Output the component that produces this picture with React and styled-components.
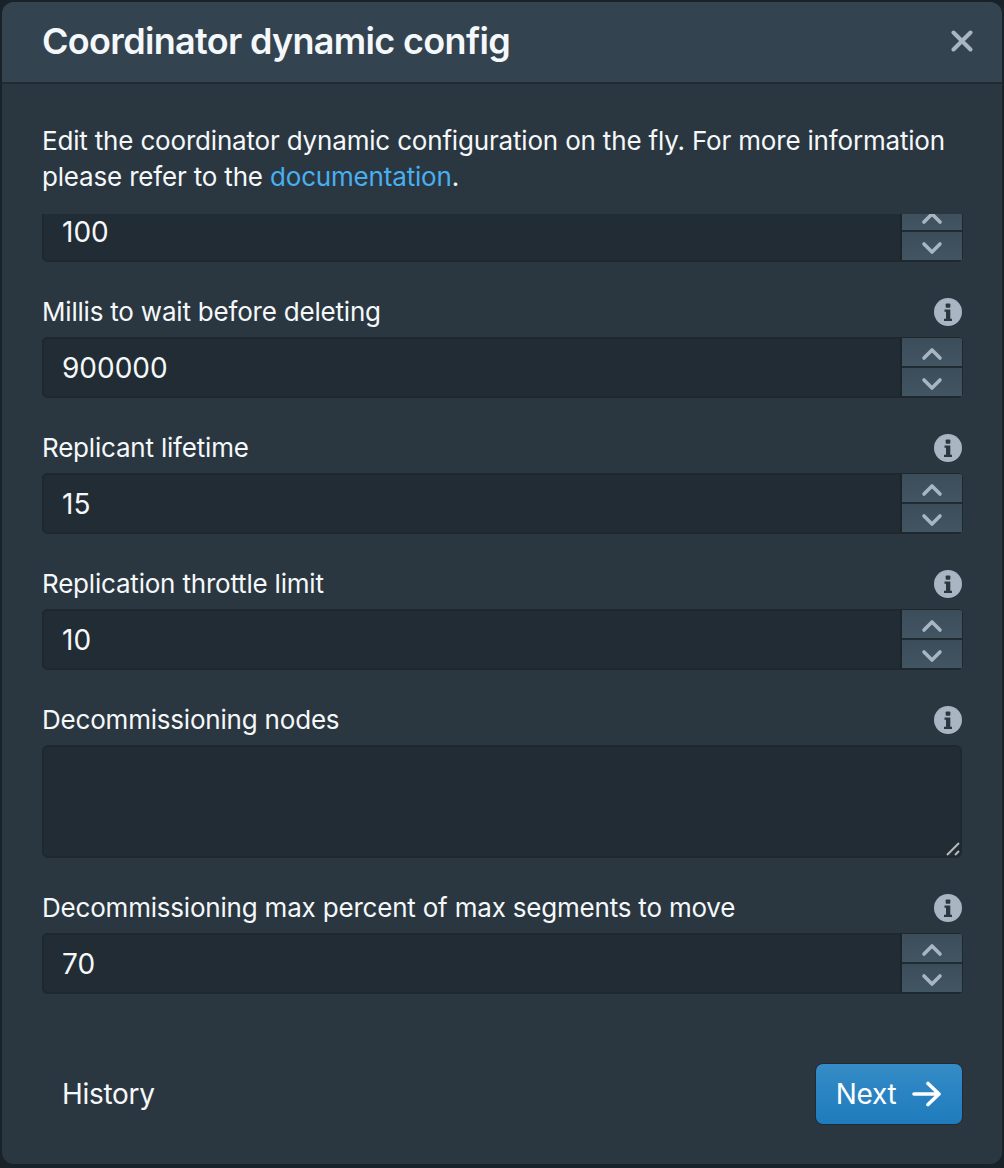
import React from "react";
import styled, { createGlobalStyle } from "styled-components";

const GlobalStyle = createGlobalStyle`
  html, body {
    margin: 0;
    height: 100%;
    background: #1a2229;
    font-family: Inter, "Liberation Sans", sans-serif;
  }
  * {
    box-sizing: border-box;
  }
`;

const Page = styled.div`
  width: 1004px;
  height: 1168px;
  padding: 2px 2px;
`;

const Dialog = styled.div`
  width: 1000px;
  height: 1162px;
  background: #2b3740;
  border-radius: 12px;
  display: flex;
  flex-direction: column;
  overflow: hidden;
`;

const Header = styled.div`
  height: 82px;
  flex-shrink: 0;
  display: flex;
  align-items: center;
  justify-content: space-between;
  padding: 0 29px 2px 40px;
  background: #33434f;
  border-bottom: 2px solid #212b33;
`;

const Title = styled.h1`
  margin: 0;
  font-size: 36px;
  font-weight: 600;
  letter-spacing: -0.68px;
  color: #f5f8fa;
`;

const CloseButton = styled.button`
  display: flex;
  padding: 0;
  border: none;
  background: none;
`;

const Intro = styled.p`
  margin: 39px 40px 19px;
  font-size: 26px;
  line-height: 36px;
  letter-spacing: -0.18px;
  color: #f5f8fa;
`;

const DocLink = styled.a`
  color: #48aff0;
`;

const Fields = styled.div`
  height: 804px;
  flex-shrink: 0;
  padding: 0 39px 24px 40px;
  display: flex;
  flex-direction: column;
  justify-content: flex-end;
  overflow: hidden;
`;

const FieldGroup = styled.div`
  flex-shrink: 0;
  margin-top: 34px;
`;

const LabelRow = styled.div`
  display: flex;
  align-items: center;
  justify-content: space-between;
  height: 30px;
  margin-bottom: 11px;
  padding-right: 1px;
`;

const Label = styled.label`
  font-size: 26px;
  letter-spacing: -0.2px;
  color: #f5f8fa;
`;

const InfoSvg = styled.svg`
  margin-top: 2px;
`;

const InputRow = styled.div`
  display: flex;
  height: 61px;
  border-radius: 6px;
  background: #222c34;
  box-shadow: inset 0 2px 0 #1f282f, inset 0 -2px 0 #1f282f,
    inset 2px 0 0 #1f282f;
  overflow: hidden;
`;

const NumberInput = styled.input`
  flex: 1;
  min-width: 0;
  padding: 0 20px;
  border: none;
  outline: none;
  background: transparent;
  font: inherit;
  font-size: 28px;
  color: #f5f8fa;
`;

const Stepper = styled.div`
  width: 63px;
  display: flex;
  flex-direction: column;
  border-left: 2px solid #1c252c;
  border-right: 1px solid #1f282f;
  border-top: 1px solid #1f282f;
  border-bottom: 2px solid #1f282f;
`;

const StepButton = styled.button`
  height: ${(p) => (p.$top ? "30px" : "28px")};
  display: flex;
  align-items: center;
  justify-content: center;
  padding: 3px 0 0;
  border: none;
  border-bottom: ${(p) => (p.$top ? "2px solid #212b33" : "none")};
  background: linear-gradient(#3c4d5a, #425563);
`;

const TextAreaWrap = styled.div`
  position: relative;
  width: calc(100% - 1px);
`;

const TextArea = styled.textarea`
  display: block;
  width: 100%;
  height: 113px;
  padding: 16px 20px;
  border: 2px solid #1f282f;
  border-radius: 6px;
  outline: none;
  resize: none;
  background: #222c34;
  font: inherit;
  font-size: 26px;
  color: #f5f8fa;
`;

const ResizeGrip = styled.svg`
  position: absolute;
  right: 2px;
  bottom: 2px;
  pointer-events: none;
`;

const Footer = styled.div`
  flex: 1;
  display: flex;
  align-items: flex-start;
  justify-content: space-between;
  padding: 45px 39px 0 60px;
`;

const HistoryButton = styled.button`
  margin-top: 14px;
  padding: 0;
  border: none;
  background: none;
  font: inherit;
  font-size: 28px;
  letter-spacing: -0.3px;
  color: #f5f8fa;
`;

const NextButton = styled.button`
  width: 148px;
  height: 62px;
  display: flex;
  align-items: center;
  justify-content: center;
  gap: 16px;
  padding: 0;
  border: 1px solid #212b33;
  border-radius: 8px;
  background: linear-gradient(#358cc6, #1f7bbd);
  font: inherit;
  font-size: 28px;
  letter-spacing: -0.3px;
  color: #ffffff;
`;

function InfoIcon() {
  return (
    <InfoSvg width="28" height="28" viewBox="0 0 28 28">
      <circle cx="14" cy="14" r="14" fill="#a7b6c2" />
      <rect x="11.7" y="5.5" width="4.6" height="4.2" rx="0.8" fill="#2b3740" />
      <path
        d="M10.5 11.5h5.8v9.2h1.7v2.3H10v-2.3h2v-6.9h-1.5z"
        fill="#2b3740"
      />
    </InfoSvg>
  );
}

function Chevron({ up }) {
  return (
    <svg width="22" height="14" viewBox="0 0 22 14" fill="none">
      <path
        d={up ? "M3 11l8-8 8 8" : "M3 3l8 8 8-8"}
        stroke="#a7b6c2"
        strokeWidth="3.6"
        strokeLinecap="round"
        strokeLinejoin="round"
      />
    </svg>
  );
}

function NumberControl({ value }) {
  return (
    <InputRow>
      <NumberInput type="text" defaultValue={value} />
      <Stepper>
        <StepButton $top>
          <Chevron up />
        </StepButton>
        <StepButton>
          <Chevron />
        </StepButton>
      </Stepper>
    </InputRow>
  );
}

function NumberField({ label, value }) {
  return (
    <FieldGroup>
      <LabelRow>
        <Label>{label}</Label>
        <InfoIcon />
      </LabelRow>
      <NumberControl value={value} />
    </FieldGroup>
  );
}

export default function App() {
  return (
    <Page>
      <GlobalStyle />
      <Dialog>
        <Header>
          <Title>Coordinator dynamic config</Title>
          <CloseButton>
            <svg width="22" height="22" viewBox="0 0 22 22" fill="none">
              <path
                d="M2.5 2.5l17 17M19.5 2.5l-17 17"
                stroke="#a7b6c2"
                strokeWidth="4"
                strokeLinecap="round"
              />
            </svg>
          </CloseButton>
        </Header>
        <Intro>
          Edit the coordinator dynamic configuration on the fly. For more
          information please refer to the{" "}
          <DocLink>documentation</DocLink>.
        </Intro>
        <Fields>
          {/* this field is scrolled mostly out of view in the list */}
          <FieldGroup>
            <NumberControl value="100" />
          </FieldGroup>
          <NumberField label="Millis to wait before deleting" value="900000" />
          <NumberField label="Replicant lifetime" value="15" />
          <NumberField label="Replication throttle limit" value="10" />
          <FieldGroup>
            <LabelRow>
              <Label>Decommissioning nodes</Label>
              <InfoIcon />
            </LabelRow>
            <TextAreaWrap>
              <TextArea />
              <ResizeGrip width="14" height="14" viewBox="0 0 14 14" fill="none">
                <path
                  d="M1 13L13 1M9 13l4-4"
                  stroke="#b8b8b8"
                  strokeWidth="2"
                />
              </ResizeGrip>
            </TextAreaWrap>
          </FieldGroup>
          <NumberField
            label="Decommissioning max percent of max segments to move"
            value="70"
          />
        </Fields>
        <Footer>
          <HistoryButton>History</HistoryButton>
          <NextButton>
            Next
            <svg width="30" height="26" viewBox="0 0 30 26" fill="none">
              <path
                d="M2 13h25M16 2.5L27 13 16 23.5"
                stroke="#ffffff"
                strokeWidth="3.6"
                strokeLinecap="round"
                strokeLinejoin="round"
              />
            </svg>
          </NextButton>
        </Footer>
      </Dialog>
    </Page>
  );
}
